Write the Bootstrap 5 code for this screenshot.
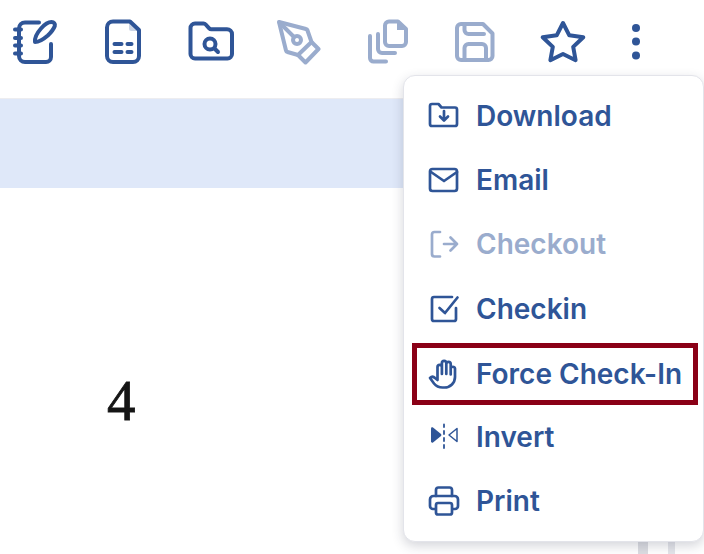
<!DOCTYPE html>
<html lang="en">
<head>
<meta charset="utf-8">
<title>Viewer menu</title>
<link href="https://cdn.jsdelivr.net/npm/bootstrap@5.3.0/dist/css/bootstrap.min.css" rel="stylesheet">
<style>
html,body{height:554px;overflow:hidden;background:#fff}
body{font-family:"Inter","Liberation Sans",sans-serif;color:#2f5597;position:relative}
.shell{height:554px}
.tools{height:99px;border-bottom:1px solid #ededf0;padding-left:11px;flex:none}
.tool{width:88px;height:48px;margin-top:17px;padding:0;border:0;background:none;flex:none;line-height:0;text-align:left;color:#2f5597}
.tool.off{color:#9aaccd}
.tool.kebab{width:48px;margin-left:-15px}
.tool svg{width:48px;height:48px;display:block}
svg.ic{fill:none;stroke:currentColor;stroke-linecap:round;stroke-linejoin:round}
.tool svg.ic{stroke-width:4}
.solid{fill:currentColor;stroke:none}
.band{height:89px;background:#dfe8f9;flex:none}
.sheet{flex:1 1 auto;padding:176px 0 0 107px}
.digit{font-family:"Liberation Serif",serif;font-size:57px;line-height:74px;color:#151515;-webkit-text-stroke:.8px #151515;filter:blur(.45px)}
.rail{height:13px;flex:none;padding-right:29px;gap:20px}
.rail-a{width:10px;background:#dcdde2}
.rail-b{width:7px;background:#e4e5ea}
.dropdown-menu.actions{display:block;position:absolute;left:403px;top:75px;width:301px;height:467px;min-width:0;padding:8px 0 0;margin:0;background:#fff;border:1px solid #e3e4ea;border-radius:12px;box-shadow:0 4px 12px rgba(40,45,70,.2)}
.actions .dropdown-item{display:flex;align-items:center;height:64.2px;padding:0 0 0 24px;gap:16px;font-size:28px;font-weight:600;line-height:34px;color:#2f5597;background:none;white-space:nowrap}
.actions .dropdown-item.disabled{color:#9aaccd}
.actions svg{width:32px;height:32px;flex:none;stroke-width:2.7}
.actions .dropdown-item.marked{width:auto;height:62px;margin:2.2px 5px 0 8px;padding-left:11px;border:5px solid #8a0016}
</style>
</head>
<body>
<div class="shell d-flex flex-column">
  <div class="tools d-flex">
    <button class="tool" type="button" aria-label="Notes"><svg class="ic" viewBox="11 17 48 48"><path d="M39 22.500H25a6 6 0 0 0-6 6V56a6 6 0 0 0 6 6h21a5 5 0 0 0 5-5V44"/><path d="M15 29.500h6M15 38h6M15 45.500h6M15 53.500h6"/><path d="M35 42c-.5-4 2-9 6-13.500 3-3.500 6.500-6.500 10.500-6.500 2.500 0 4 1.800 3.300 4-1.300 3.500-3.800 6.500-7 9.500-4 3.500-8 6.500-12.800 6.500z"/></svg></button>
    <button class="tool" type="button" aria-label="Form"><svg class="ic" viewBox="99 17 48 48"><path d="M130 21.500H113a6 6 0 0 0-6 6V56a6 6 0 0 0 6 6h20a6 6 0 0 0 6-6V30z"/><path class="solid" d="M129 22l9.500 9h-7a2.500 2.500 0 0 1-2.500-2.500z" opacity=".25"/><path d="M114.500 44h7M127.500 44h4M114.500 52h7M127.500 52h4"/></svg></button>
    <button class="tool" type="button" aria-label="Search folder"><svg class="ic" viewBox="187 17 48 48"><path d="M190.500 28a4.500 4.500 0 0 1 4.500-4.500h8.500a3 3 0 0 1 2.200 1l3.500 3.800a3 3 0 0 0 2.200 1H227a5 5 0 0 1 5 5V54a4.500 4.500 0 0 1-4.500 4.500H195a4.500 4.500 0 0 1-4.500-4.500z"/><circle cx="210" cy="44" r="5.500"/><path d="M214.500 48.500l3.500 3.500"/></svg></button>
    <button class="tool off" type="button" aria-label="Sign"><svg class="ic" viewBox="275 17 48 48"><path d="M279 22l27 7a2 2 0 0 1 1.500 1.500L311.500 42 298 55l-10.500-3a2 2 0 0 1-1.500-1.500z"/><path d="M312 42.500l6.500 6.500-13 13.500-7.500-7.500"/><circle cx="297" cy="40" r="4"/><path d="M279.500 22.500L294 37"/></svg></button>
    <button class="tool off" type="button" aria-label="Copy"><svg class="ic" viewBox="363 17 48 48"><path d="M370 36v22a3.500 3.500 0 0 0 3.500 3.500H386"/><path d="M378 34v15a4 4 0 0 0 4 4h13"/><path d="M398 21.500h-9a4 4 0 0 0-4 4V42a4 4 0 0 0 4 4h13a4 4 0 0 0 4-4V29z"/><path class="solid" d="M397 22l8.500 8h-8.500z"/></svg></button>
    <button class="tool off" type="button" aria-label="Save"><svg class="ic" viewBox="452 17 48 48"><path d="M458 28a4 4 0 0 1 4-4h22l9.500 9.500V56a4 4 0 0 1-4 4H462a4 4 0 0 1-4-4z"/><path d="M465.500 24.500V30a4 4 0 0 0 4 4H485"/><path d="M465.500 60V48a4 4 0 0 1 4-4H483a4 4 0 0 1 4 4v12"/></svg></button>
    <button class="tool" type="button" aria-label="Favourite"><svg class="ic" viewBox="540 17 48 48"><path d="M564 23l6.300 12.300 14 1.900-10.100 9.700 2.400 13.300L564 54l-12.600 6.200 2.400-13.300-10.100-9.700 14-1.900z"/></svg></button>
    <button class="tool kebab" type="button" aria-label="More"><svg class="ic" viewBox="612 17 48 48"><g class="solid"><circle cx="636" cy="28" r="4"/><circle cx="636" cy="41.500" r="4"/><circle cx="636" cy="55.500" r="4"/></g></svg></button>
  </div>
  <div class="band"></div>
  <div class="sheet"><div class="digit">4</div></div>
  <div class="rail d-flex justify-content-end"><div class="rail-a"></div><div class="rail-b"></div></div>
</div>

<ul class="dropdown-menu show actions list-unstyled">
  <li><a class="dropdown-item" href="#"><svg class="ic" viewBox="428 100 32 32"><path d="M430 106a2 2 0 0 1 2-2h6.500l3 3.500H455a2 2 0 0 1 2 2V124a2 2 0 0 1-2 2H432a2 2 0 0 1-2-2z"/><path d="M444 111v9M440 116.500l4 4 4-4"/></svg>Download</a></li>
  <li><a class="dropdown-item" href="#"><svg class="ic" viewBox="428 164 32 32"><rect x="430" y="169" width="27" height="22" rx="2.500"/><path d="M431 172l13 9 13-9"/></svg>Email</a></li>
  <li><a class="dropdown-item disabled" href="#" aria-disabled="true"><svg class="ic" viewBox="428 228 32 32"><path d="M440 232h-5.500a2.500 2.500 0 0 0-2.500 2.500V254a2.500 2.500 0 0 0 2.500 2.500H440"/><path d="M444 244h13M450.500 237.500l6.500 6.500-6.500 6.500"/></svg>Checkout</a></li>
  <li><a class="dropdown-item" href="#"><svg class="ic" viewBox="428 293 32 32"><path d="M456 308v11a2 2 0 0 1-2 2h-20a2 2 0 0 1-2-2v-20a2 2 0 0 1 2-2h18"/><path d="M439.500 308l5.500 5 12.500-15.500"/></svg>Checkin</a></li>
  <li><a class="dropdown-item marked" href="#"><svg class="ic" viewBox="428 357 32 32"><path d="M430 377c1.500-1.500 3.500-1.500 5 0l2.500 2v-13a2.200 2.200 0 0 1 4.400 0V373v-11a2.200 2.200 0 0 1 4.400 0V373v-10a2.200 2.200 0 0 1 4.400 0v10.500-6a2.200 2.200 0 0 1 4.300 0V376a10.500 10.500 0 0 1-10.500 10.500h-2c-4 0-6.500-1.500-8.500-4z"/></svg>Force Check-In</a></li>
  <li><a class="dropdown-item" href="#"><svg class="ic" viewBox="428 421 32 32"><path class="solid" d="M431 428.500c0-1 1-1.500 2-1l8 6.500a1.500 1.500 0 0 1 0 2l-8 6.500c-1 .5-2 0-2-1z"/><path d="M444 424.500v2.500M444 431v3M444 438v3M444 445v3" stroke-width="1.800"/><path d="M457 428.500v13l-8-6.500z" stroke-width="1.500"/></svg>Invert</a></li>
  <li><a class="dropdown-item" href="#"><svg class="ic" viewBox="428 485 32 32"><path d="M436 496v-6a2.500 2.500 0 0 1 2.500-2.500h11a2.500 2.500 0 0 1 2.500 2.500v6"/><path d="M435 509h-2a3 3 0 0 1-3-3v-6.500a3.500 3.500 0 0 1 3.500-3.500h21a3.500 3.500 0 0 1 3.500 3.500v6.500a3 3 0 0 1-3 3h-2"/><rect x="436" y="503" width="16" height="11.500" rx="2"/></svg>Print</a></li>
</ul>
</body>
</html>
